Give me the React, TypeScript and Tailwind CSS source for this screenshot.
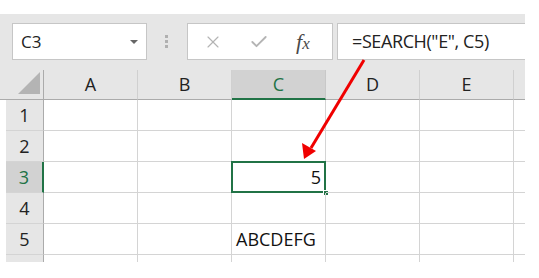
import { X, Check } from 'lucide-react';

const COLS = ['A', 'B', 'C', 'D', 'E'];
const ROWS = [1, 2, 3, 4, 5];

// cell contents keyed by address
const CELLS: Record<string, { text: string; align: 'left' | 'right' }> = {
  C3: { text: '5', align: 'right' },
  C5: { text: 'ABCDEFG', align: 'left' },
};

const font = { fontFamily: '"Open Sans", "Noto Sans", sans-serif' };

function FormulaBar() {
  return (
    <div className="flex h-[56px] w-[525px] items-center bg-[#e6e6e6] pb-[1px]">
      {/* Name box */}
      <div className="ml-[12px] flex h-[37px] w-[135px] items-center justify-between border border-[#c6c6c6] bg-white pl-[8px] pr-[8px]">
        <span className="text-[17px] text-[#222]">C3</span>
        <span className="h-0 w-0 border-x-[4px] border-t-[4px] border-x-transparent border-t-[#666]" />
      </div>

      {/* Grip dots */}
      <div className="ml-[18px] flex w-[4px] flex-col gap-[2px]">
        <span className="h-[3px] w-[3px] bg-[#b0b0b0]" />
        <span className="h-[3px] w-[3px] bg-[#b0b0b0]" />
        <span className="h-[3px] w-[3px] bg-[#b0b0b0]" />
      </div>

      {/* Cancel / enter / fx */}
      <div className="ml-[18px] flex h-[37px] w-[146px] items-center border border-[#c6c6c6] bg-white">
        <X className="ml-[15px] h-[20px] w-[20px] text-[#b4b4b4]" strokeWidth={1.4} />
        <Check className="ml-[26px] h-[20px] w-[20px] text-[#b4b4b4]" strokeWidth={2.2} />
        <span
          className="ml-[27px] text-[22px] italic text-[#4a4a4a]"
          style={{ fontFamily: '"Liberation Serif", serif' }}
        >
          f<span className="text-[17px]">x</span>
        </span>
      </div>

      {/* Formula input */}
      <div className="ml-[4px] flex h-[37px] flex-1 items-center border-y border-l border-[#c6c6c6] bg-white pl-[14px]">
        <span className="text-[18px] tracking-[-0.4px] text-[#222]">=SEARCH("E", C5)</span>
      </div>
    </div>
  );
}

function HeaderRow() {
  return (
    <div className="flex h-[30px] w-[525px] bg-[#e6e6e6]">
      <div className="flex w-[44px] items-end justify-end border-b border-r border-[#ababab] pb-[5px] pr-[3px]">
        <svg width="22" height="22" viewBox="0 0 22 22">
          <polygon points="22,0 22,22 0,22" fill="#b4b4b4" />
        </svg>
      </div>
      {COLS.map((c) => {
        const active = c === 'C';
        return (
          <div
            key={c}
            className={`flex w-[94px] items-center justify-center border-r ${
              active
                ? 'border-b-2 border-b-[#217346] border-r-[#c8c8c8] bg-[#d2d2d2] text-[#217346]'
                : 'border-b border-b-[#ababab] border-r-[#d0d0d0] text-[#222]'
            } text-[18px]`}
          >
            {c}
          </div>
        );
      })}
      <div className="flex-1 border-b border-[#ababab]" />
    </div>
  );
}

function GridRow({ n }: { n: number }) {
  const active = n === 3;
  return (
    <div className="flex h-[31px]">
      <div
        className={`flex w-[38px] items-center justify-center border-b border-b-[#d4d4d4] text-[18px] ${
          active
            ? 'border-r-2 border-r-[#217346] bg-[#d2d2d2] text-[#217346]'
            : 'border-r border-r-[#ababab] bg-[#e6e6e6] text-[#222]'
        }`}
      >
        {n}
      </div>
      {COLS.map((c) => {
        const addr = `${c}${n}`;
        const cell = CELLS[addr];
        const selected = addr === 'C3';
        return (
          <div
            key={c}
            className={`relative flex w-[94px] items-center border-b border-r border-[#d4d4d4] text-[18px] text-[#111] ${
              cell?.align === 'right' ? 'justify-end pr-[4px]' : 'pl-[4px]'
            }`}
          >
            {cell?.text}
            {selected && (
              <>
                <div className="absolute -left-[1px] -top-[1px] h-[32px] w-[95px] border-2 border-[#217346]" />
                <div className="absolute -bottom-[4px] -right-[4px] h-[6px] w-[6px] border border-white bg-[#217346]" />
              </>
            )}
          </div>
        );
      })}
      <div className="w-[11px] border-b border-[#d4d4d4]" />
    </div>
  );
}

export default function App() {
  return (
    <div className="relative h-[278px] w-[539px] overflow-hidden bg-white" style={font}>
      <div className="h-[14px]" />
      <FormulaBar />
      <HeaderRow />
      <div className="ml-[6px] w-[519px]">
        {ROWS.map((n) => (
          <GridRow key={n} n={n} />
        ))}
        {/* partially visible sixth row */}
        <div className="flex h-[7px]">
          <div className="w-[38px] border-r border-[#ababab] bg-[#e6e6e6]" />
          {COLS.map((c) => (
            <div key={c} className="w-[94px] border-r border-[#d4d4d4]" />
          ))}
        </div>
      </div>

      {/* red annotation arrow */}
      <svg className="absolute left-0 top-0" width="539" height="278" viewBox="0 0 539 278">
        <line x1="364" y1="60" x2="311" y2="148" stroke="#f00000" strokeWidth="3" />
        <polygon points="304,159 302,143 316,151" fill="#f00000" />
      </svg>
    </div>
  );
}
